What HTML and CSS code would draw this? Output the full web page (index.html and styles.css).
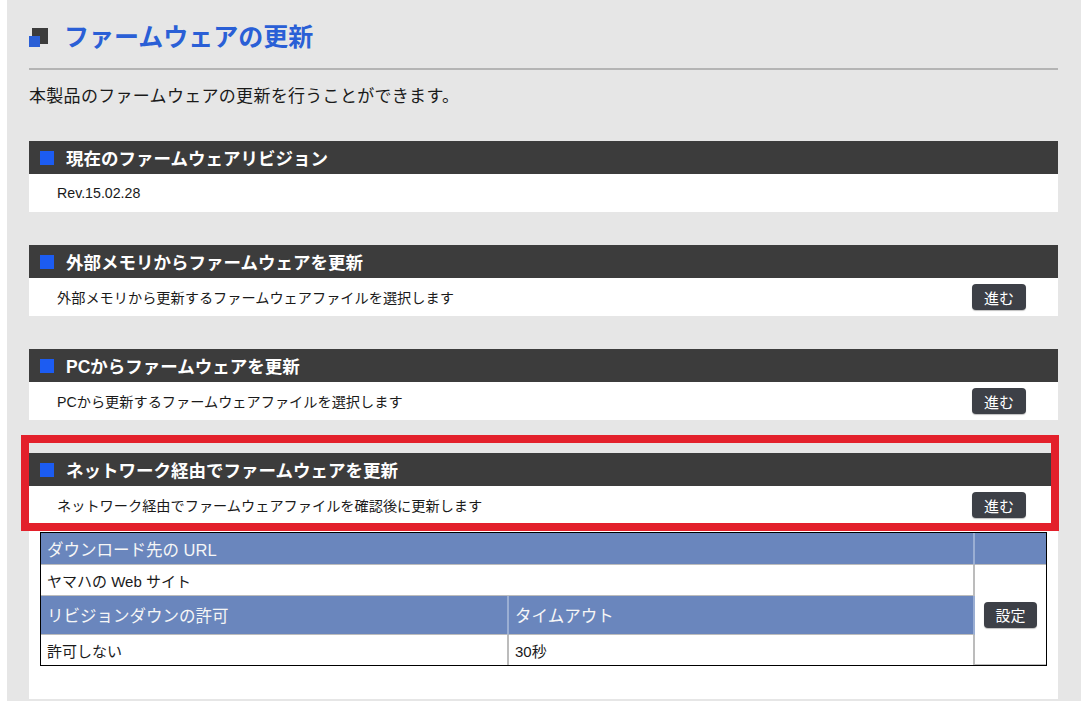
FILE: index.html
```html
<!DOCTYPE html>
<html lang="ja">
<head>
<meta charset="UTF-8">
<meta name="viewport" content="width=device-width, initial-scale=1.0">
<title>ファームウェアの更新</title>
<link rel="stylesheet" href="styles.css">
</head>
<body>
<div class="page">
    <div class="title">
        <svg class="title-icon" width="19" height="19" viewBox="0 0 19 19">
            <rect x="3" y="0" width="16" height="16" fill="#3c3c3c"/>
            <rect x="0" y="8" width="11" height="11" fill="#2a5fd6"/>
        </svg>
        <h1>ファームウェアの更新</h1>
    </div>
    <div class="rule"></div>
    <p class="lead">本製品のファームウェアの更新を行うことができます。</p>

    <div class="sections">
        <div class="section">
            <div class="section-head"><span class="marker"></span>現在のファームウェアリビジョン</div>
            <div class="section-body">Rev.15.02.28</div>
        </div>

        <div class="section">
            <div class="section-head"><span class="marker"></span>外部メモリからファームウェアを更新</div>
            <div class="section-body">
                <span>外部メモリから更新するファームウェアファイルを選択します</span>
                <button class="btn">進む</button>
            </div>
        </div>

        <div class="section">
            <div class="section-head"><span class="marker"></span>PCからファームウェアを更新</div>
            <div class="section-body">
                <span>PCから更新するファームウェアファイルを選択します</span>
                <button class="btn">進む</button>
            </div>
        </div>

        <div class="section last">
            <div class="section-head"><span class="marker"></span>ネットワーク経由でファームウェアを更新</div>
            <div class="section-body">
                <span>ネットワーク経由でファームウェアファイルを確認後に更新します</span>
                <button class="btn">進む</button>
            </div>
            <div class="table-wrap">
                <table class="settings">
                    <colgroup>
                        <col class="c1">
                        <col class="c2">
                        <col>
                    </colgroup>
                    <tr class="row-head r1">
                        <th colspan="2">ダウンロード先の URL</th>
                        <th class="side"></th>
                    </tr>
                    <tr class="row-data">
                        <td colspan="2">ヤマハの Web サイト</td>
                        <td class="side" rowspan="3"><button class="btn">設定</button></td>
                    </tr>
                    <tr class="row-head r3">
                        <th>リビジョンダウンの許可</th>
                        <th>タイムアウト</th>
                    </tr>
                    <tr class="row-data">
                        <td>許可しない</td>
                        <td>30秒</td>
                    </tr>
                </table>
            </div>
            <div class="highlight"></div>
        </div>
    </div>
</div>
</body>
</html>
```

FILE: styles.css
```css
body {
    margin: 0;
    background: #ffffff;
    font-family: "Liberation Sans", "Noto Sans CJK JP", sans-serif;
    color: #1a1a1a;
}

.page {
    margin-left: 7px;
    min-height: 701px;
    background: #e6e6e6;
    padding: 0 23px 0 22px;
    box-sizing: border-box;
}

/* page title */
.title {
    display: flex;
    align-items: center;
    gap: 16px;
    height: 36px;
    padding-top: 19px;
}

.title-icon {
    display: block;
    margin-top: 1px;
}

.title h1 {
    margin: 0;
    font-size: 25px;
    line-height: 36px;
    font-weight: bold;
    color: #2a5fd6;
}

.rule {
    height: 2px;
    margin-top: 13px;
    background: #b4b4b4;
}

.lead {
    margin: 15px 0 0;
    font-size: 17px;
    line-height: 24px;
    letter-spacing: 0.3px;
}

.sections {
    margin-top: 32px;
}

/* section blocks */
.section {
    background: #ffffff;
    margin-bottom: 33px;
}

.section.last {
    position: relative;
    margin-bottom: 0;
    padding-bottom: 33px;
}

.section-head {
    display: flex;
    align-items: center;
    gap: 12px;
    height: 33px;
    padding-left: 11px;
    background: #3c3c3c;
    color: #ffffff;
    font-size: 17.5px;
    font-weight: bold;
}

.marker {
    width: 14px;
    height: 14px;
    background: #1c5cf2;
}

.section-body {
    display: flex;
    align-items: center;
    justify-content: space-between;
    height: 38px;
    padding: 0 32px 0 28px;
    font-size: 14.2px;
}

.btn {
    width: 54px;
    height: 26px;
    padding: 0;
    border: none;
    border-radius: 4px;
    background: #3d4047;
    color: #ffffff;
    font-family: "Liberation Sans", "Noto Sans CJK JP", sans-serif;
    font-size: 15px;
    box-shadow: 0 1px 1px rgba(0, 0, 0, 0.25);
    cursor: pointer;
}

/* network settings table */
.table-wrap {
    padding: 8px 11px 0;
}

.settings {
    width: 100%;
    border-collapse: separate;
    border-spacing: 0;
    border: 1px solid #000000;
}

.settings .c1 {
    width: 468px;
}

.settings .c2 {
    width: 466px;
}

.settings th,
.settings td {
    padding: 0 0 0 6px;
    text-align: left;
    border-right: 2px solid #bcbcbc;
    border-bottom: 1px solid #bcbcbc;
}

.settings th {
    background: #6a86bd;
    color: #f6f6f6;
    font-weight: normal;
    font-size: 16.5px;
    border-right-color: #9aaed3;
}

.settings td {
    font-size: 15px;
}

.settings tr:last-child td {
    border-bottom: none;
}

.settings .side {
    border-right: none;
    padding: 0;
    text-align: center;
    vertical-align: middle;
}

.r1 th {
    height: 31px;
}

.r3 th {
    height: 38px;
}

.row-data td {
    height: 30px;
}

.settings .side .btn {
    width: 53px;
}

/* red annotation frame */
.highlight {
    position: absolute;
    top: -18px;
    left: -8px;
    right: -1px;
    height: 96px;
    border: 8px solid #e3202b;
    box-sizing: border-box;
    pointer-events: none;
}
```
